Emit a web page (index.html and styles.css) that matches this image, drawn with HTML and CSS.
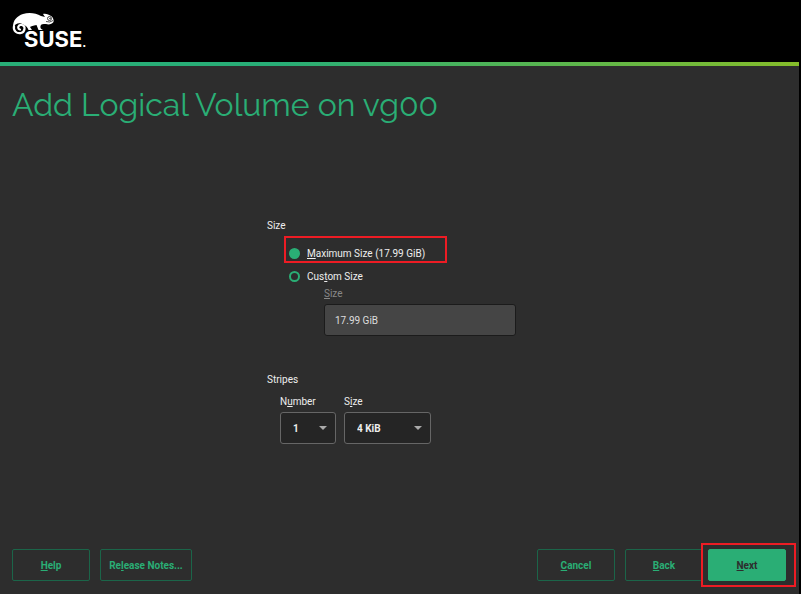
FILE: index.html
```
<!DOCTYPE html>
<html lang="en">

<head>
    <meta charset="UTF-8">
    <meta name="viewport" content="width=device-width, initial-scale=1.0">
    <title>Add Logical Volume</title>
    <link rel="stylesheet" href="styles.css">
</head>

<body>
    <header class="topbar">
        <svg class="logo" viewBox="0 0 80 46" role="img" aria-label="SUSE">
            <!-- chameleon -->
            <path fill="#fff" d="M1 15C1 8 5 4 11 2C17 0 24 1 29 4L33 5L31 2C34 1 37 3 39 4C41 5 42 8 41.500 10C40 12 37 13 34 12C31 12 29 12 28.500 14C28 16 29 17 31 18H26.500L24.500 13C21 14 19 14 18 15L20 18H16.500Q15 14 12 13C8 10 4 11 1 15Z" />
            <path fill="none" stroke="#fff" stroke-width="2.200" stroke-linecap="round" d="M2 14C1 19 5 22 9 21C13 20 14 14 10 13C6 12 5 17 8 17.500" />
            <circle cx="37.500" cy="6.500" r="2" fill="#fff" stroke="#000" stroke-width="0.700" />
            <circle cx="38" cy="6.500" r="0.700" />
            <path fill="none" stroke="#000" stroke-width="0.700" d="M34 9.500Q38 11 41 8.500" />
            <text class="logo-text" x="12" y="35">SUSE<tspan class="logo-dot">.</tspan></text>
        </svg>
    </header>
    <main class="page">
        <h1>Add Logical Volume on vg00</h1>
        <form id="volumeForm" class="volume-form">
            <fieldset class="size-group">
                <legend>Size</legend>
                <div class="option highlight">
                    <input type="radio" name="size" id="maxSize" checked>
                    <label for="maxSize"><u>M</u>aximum Size (17.99 GiB)</label>
                </div>
                <div class="option">
                    <input type="radio" name="size" id="customSize">
                    <label for="customSize">Cus<u>t</u>om Size</label>
                </div>
                <div class="custom-size">
                    <label for="sizeValue"><u>S</u>ize</label>
                    <input type="text" id="sizeValue" value="17.99 GiB" disabled>
                </div>
            </fieldset>
            <fieldset class="stripes-group">
                <legend>Stripes</legend>
                <div class="stripes">
                    <div class="field">
                        <label for="stripeNumber">N<u>u</u>mber</label>
                        <div class="select number">
                            <select id="stripeNumber">
                                <option>1</option>
                            </select>
                        </div>
                    </div>
                    <div class="field">
                        <label for="stripeSize">S<u>i</u>ze</label>
                        <div class="select kib">
                            <select id="stripeSize">
                                <option>4 KiB</option>
                            </select>
                        </div>
                    </div>
                </div>
            </fieldset>
        </form>
    </main>
    <footer class="actions">
        <button type="button"><u>H</u>elp</button>
        <button type="button" class="notes">Re<u>l</u>ease Notes...</button>
        <span class="spacer"></span>
        <button type="button"><u>C</u>ancel</button>
        <button type="button"><u>B</u>ack</button>
        <div class="next highlight">
            <button type="submit" form="volumeForm" class="primary"><u>N</u>ext</button>
        </div>
    </footer>
</body>

</html>
```
FILE: styles.css
```
* {
    box-sizing: border-box;
}

html {
    background-color: #000;
}

body {
    display: flex;
    flex-direction: column;
    min-height: 100vh;
    margin: 0 2px 0 0;
    background-color: #2d2d2d;
    color: #eee;
    font-family: Roboto, sans-serif;
    font-size: 10px;
    line-height: 16px;
}

/* Header with the green line under it */
.topbar {
    padding: 12px 12px 4px;
    background-color: #000;
    border-bottom: 4px solid;
    border-image: linear-gradient(to right, #28ae77 35%, #86bd2a) 1;
}

.logo {
    display: block;
    width: 80px;
    height: 46px;
}

.logo-text {
    fill: #fff;
    font-family: Inter, sans-serif;
    font-size: 22px;
    font-weight: 700;
}

.logo-dot {
    font-size: 12px;
}

.page {
    display: flex;
    flex-direction: column;
    flex: 1;
}

h1 {
    margin: 18px 12px 92px;
    color: #2aae75;
    font-family: Raleway, Lato, sans-serif;
    font-size: 32px;
    font-weight: 400;
    font-variant-numeric: oldstyle-nums;
    line-height: 42px;
}

.volume-form {
    width: 265px;
    margin: 0 auto;
}

fieldset {
    margin: 0;
    padding: 0;
    border: 0;
}

legend {
    padding: 0;
}

u {
    text-decoration-thickness: 1px;
    text-decoration-skip-ink: none;
    text-underline-offset: 1px;
}

/* Size */
.size-group {
    margin-bottom: 36px;
}

.option {
    display: flex;
    align-items: center;
    gap: 7px;
    width: 163px;
    margin-left: 17px;
    padding: 6px 5px 1px;
}

.option:first-of-type {
    margin-top: 6px;
}

input[type="radio"] {
    appearance: none;
    width: 11px;
    height: 11px;
    margin: 0 0 1px;
    border: 2px solid #2aae75;
    border-radius: 50%;
}

input[type="radio"]:checked {
    background-color: #2aae75;
}

.custom-size {
    width: 192px;
    margin-left: 57px;
    color: #888;
}

.custom-size label,
.field label {
    display: block;
    margin-bottom: 2px;
}

input[type="text"] {
    display: block;
    width: 100%;
    height: 32px;
    padding: 0 10px;
    border: 1px solid #1b1b1b;
    border-radius: 3px;
    background-color: #454545;
    color: #ddd;
    font: inherit;
}

/* Stripes */
.stripes {
    display: flex;
    gap: 8px;
    margin: 6px 0 0 13px;
}

.select {
    position: relative;
}

.select::after {
    content: "";
    position: absolute;
    top: 14px;
    right: 9px;
    border: 4px solid transparent;
    border-top-color: #aaa;
    border-bottom: 0;
    pointer-events: none;
}

select {
    appearance: none;
    width: 100%;
    height: 32px;
    padding: 2px 12px 0;
    border: 1px solid #666;
    border-radius: 3px;
    background-color: #252525;
    color: #eee;
    font: inherit;
    font-weight: 700;
}

.number {
    width: 56px;
}

.kib {
    width: 87px;
}

/* Bottom buttons */
.actions {
    display: flex;
    gap: 10px;
    padding: 12px 13px 13px 12px;
}

.spacer {
    flex: 1;
}

button {
    width: 78px;
    height: 32px;
    padding: 2px 0 0;
    border: 1px solid #1b6549;
    border-radius: 2px;
    background-color: transparent;
    color: #2aae75;
    font: inherit;
    font-weight: 700;
}

.notes {
    width: 92px;
}

.primary {
    display: block;
    border-color: #2aae75;
    background-color: #2aae75;
    color: #2d2d2d;
}

/* Red frames around the picked items */
.highlight {
    position: relative;
}

.highlight::after {
    content: "";
    position: absolute;
    inset: -4px 0 0;
    border: 2px solid #ed1c24;
    pointer-events: none;
}

.next {
    margin-left: -5px;
}

.next::after {
    inset: -6px -10px -6px -7px;
}
```
